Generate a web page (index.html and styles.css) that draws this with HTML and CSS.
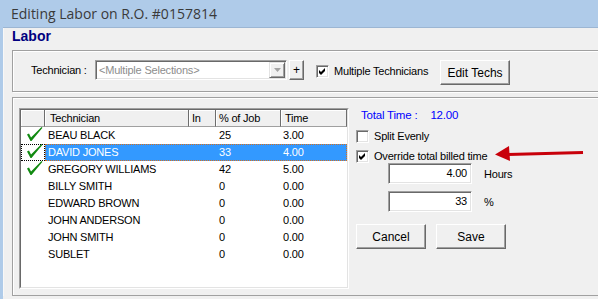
FILE: index.html
```html
<!DOCTYPE html>
<html lang="en">
<head>
    <meta charset="UTF-8">
    <title>Editing Labor on R.O. #0157814</title>
    <link rel="stylesheet" href="styles.css">
</head>
<body>
    <div class="window">
        <div class="titlebar">Editing Labor on R.O. #0157814</div>
        <div class="client">
            <div class="heading">Labor</div>

            <div class="group group-top">
                <span class="tech-label">Technician :</span>
                <div class="combo">
                    <span class="combo-text">&lt;Multiple Selections&gt;</span>
                    <span class="combo-btn">
                        <svg width="7" height="4" viewBox="0 0 7 4"><path d="M0 0H7L3.5 4Z" fill="#a3a3a3"/></svg>
                    </span>
                </div>
                <button class="btn btn-plus">+</button>
                <label class="check check-multi">
                    <span class="box"><svg width="9" height="9" viewBox="0 0 9 9"><path d="M1 3L3 5L7 1V4L3 8L1 6Z" fill="#000"/></svg></span>
                    Multiple Technicians
                </label>
                <button class="btn btn-edit">Edit Techs</button>
            </div>

            <div class="group group-main">
                <div class="grid">
                    <div class="grid-inner">
                        <div class="row head">
                            <div class="cell c-check"></div>
                            <div class="cols">
                                <div class="cell c-name">Technician</div>
                                <div class="cell c-in">In</div>
                                <div class="cell c-pct">% of Job</div>
                                <div class="cell c-time">Time</div>
                            </div>
                        </div>
                        <div class="row">
                            <div class="cell c-check"><svg class="tick" width="16" height="15" viewBox="0 0 16 15"><path d="M0 7.5L2 6.5L4 10.5L14.5 0L15.5 0.8L4.5 14H3.5Z" fill="#118a11"/></svg></div>
                            <div class="cols">
                                <div class="cell c-name">BEAU BLACK</div>
                                <div class="cell c-in"></div>
                                <div class="cell c-pct">25</div>
                                <div class="cell c-time">3.00</div>
                            </div>
                        </div>
                        <div class="row selected">
                            <div class="cell c-check"><svg class="tick" width="16" height="15" viewBox="0 0 16 15"><path d="M0 7.5L2 6.5L4 10.5L14.5 0L15.5 0.8L4.5 14H3.5Z" fill="#118a11"/></svg></div>
                            <div class="cols">
                                <div class="cell c-name">DAVID JONES</div>
                                <div class="cell c-in"></div>
                                <div class="cell c-pct">33</div>
                                <div class="cell c-time">4.00</div>
                            </div>
                        </div>
                        <div class="row">
                            <div class="cell c-check"><svg class="tick" width="16" height="15" viewBox="0 0 16 15"><path d="M0 7.5L2 6.5L4 10.5L14.5 0L15.5 0.8L4.5 14H3.5Z" fill="#118a11"/></svg></div>
                            <div class="cols">
                                <div class="cell c-name">GREGORY WILLIAMS</div>
                                <div class="cell c-in"></div>
                                <div class="cell c-pct">42</div>
                                <div class="cell c-time">5.00</div>
                            </div>
                        </div>
                        <div class="row">
                            <div class="cell c-check"></div>
                            <div class="cols">
                                <div class="cell c-name">BILLY SMITH</div>
                                <div class="cell c-in"></div>
                                <div class="cell c-pct">0</div>
                                <div class="cell c-time">0.00</div>
                            </div>
                        </div>
                        <div class="row">
                            <div class="cell c-check"></div>
                            <div class="cols">
                                <div class="cell c-name">EDWARD BROWN</div>
                                <div class="cell c-in"></div>
                                <div class="cell c-pct">0</div>
                                <div class="cell c-time">0.00</div>
                            </div>
                        </div>
                        <div class="row">
                            <div class="cell c-check"></div>
                            <div class="cols">
                                <div class="cell c-name">JOHN ANDERSON</div>
                                <div class="cell c-in"></div>
                                <div class="cell c-pct">0</div>
                                <div class="cell c-time">0.00</div>
                            </div>
                        </div>
                        <div class="row">
                            <div class="cell c-check"></div>
                            <div class="cols">
                                <div class="cell c-name">JOHN SMITH</div>
                                <div class="cell c-in"></div>
                                <div class="cell c-pct">0</div>
                                <div class="cell c-time">0.00</div>
                            </div>
                        </div>
                        <div class="row">
                            <div class="cell c-check"></div>
                            <div class="cols">
                                <div class="cell c-name">SUBLET</div>
                                <div class="cell c-in"></div>
                                <div class="cell c-pct">0</div>
                                <div class="cell c-time">0.00</div>
                            </div>
                        </div>
                    </div>
                </div>

                <div class="side">
                    <div class="total"><span>Total Time :</span><span class="total-value">12.00</span></div>
                    <label class="check check-split">
                        <span class="box"></span>
                        Split Evenly
                    </label>
                    <label class="check check-override">
                        <span class="box"><svg width="9" height="9" viewBox="0 0 9 9"><path d="M1 3L3 5L7 1V4L3 8L1 6Z" fill="#000"/></svg></span>
                        Override total billed time
                    </label>
                    <div class="field field-hours">
                        <span class="input">4.00</span>
                        <span class="unit">Hours</span>
                    </div>
                    <div class="field field-pct">
                        <span class="input">33</span>
                        <span class="unit">%</span>
                    </div>
                    <div class="actions">
                        <button class="btn btn-action">Cancel</button>
                        <button class="btn btn-action">Save</button>
                    </div>
                </div>
            </div>
        </div>

        <!-- red callout arrow drawn over the dialog -->
        <svg class="callout" width="96" height="22" viewBox="0 0 96 22">
            <path d="M16 11.6L92 9.6" stroke="#c8000a" stroke-width="3" fill="none"/>
            <path d="M4 11.4L18 3L19 18Z" fill="#c8000a"/>
        </svg>
    </div>
</body>
</html>
```

FILE: styles.css
```css
body {
    margin: 0;
    background: #f0f0f0;
    font-family: "Liberation Sans", Arial, sans-serif;
    font-size: 11px;
    letter-spacing: -0.2px;
    color: #000;
}
.window {
    position: relative;
    width: 598px;
    height: 299px;
    overflow: hidden;
    border-left: 3px solid #afcbe9;
    box-sizing: border-box;
}
.titlebar {
    height: 27px;
    line-height: 27px;
    padding-left: 8px;
    background: #afcbe9;
    border-bottom: 1px solid #9cb6d3;
    font-family: "Open Sans", "Noto Sans", sans-serif;
    font-size: 14px;
    letter-spacing: 0;
    color: #3a3a3a;
}
.client {
    border-left: 1px solid #f8f8f8;
    padding-left: 8px;
    overflow: hidden;
}
.heading {
    height: 16px;
    line-height: 16px;
    font-size: 14px;
    font-weight: bold;
    letter-spacing: 0;
    color: #000080;
}

/* etched group boxes */
.group {
    width: 640px;
    box-sizing: border-box;
    border: 1px solid #a0a0a0;
    box-shadow: inset 1px 1px 0 #fff, 1px 1px 0 #fff;
    display: flex;
    align-items: flex-start;
}
.group-top {
    margin-top: 6px;
    height: 42px;
    padding: 9px 0 0 18px;
}
.group-main {
    margin-top: 5px;
    height: 199px;
    padding: 10px 0 0 6px;
}

.tech-label {
    width: 64px;
    line-height: 20px;
}
.combo {
    width: 192px;
    height: 20px;
    box-sizing: border-box;
    padding: 1px;
    background: #fff;
    border: 1px solid;
    border-color: #a0a0a0 #fff #fff #a0a0a0;
    box-shadow: inset 1px 1px 0 #696969, inset -1px -1px 0 #e3e3e3;
    display: flex;
}
.combo-text {
    flex: 1;
    padding-left: 2px;
    line-height: 16px;
    color: #8d8d8d;
}
.combo-btn {
    width: 16px;
    height: 16px;
    box-sizing: border-box;
    background: #f0f0f0;
    border: 1px solid;
    border-color: #e3e3e3 #696969 #696969 #e3e3e3;
    box-shadow: inset 1px 1px 0 #fff, inset -1px -1px 0 #a0a0a0;
    display: flex;
    align-items: center;
    justify-content: center;
}

/* classic raised buttons */
.btn {
    box-sizing: border-box;
    margin: 0;
    padding: 0;
    background: #f0f0f0;
    border: 1px solid;
    border-color: #fff #696969 #696969 #fff;
    box-shadow: inset -1px -1px 0 #a0a0a0;
    font: inherit;
    color: #000;
}
.btn-plus {
    width: 15px;
    height: 20px;
    margin-left: 2px;
    font-size: 12px;
}
.btn-edit {
    width: 70px;
    height: 25px;
    font-size: 12px;
}
.btn-action {
    width: 70px;
    height: 25px;
    font-size: 12px;
}

/* checkboxes */
.check {
    display: flex;
    align-items: center;
    height: 13px;
    line-height: 13px;
    white-space: nowrap;
}
.box {
    width: 13px;
    height: 13px;
    box-sizing: border-box;
    margin-right: 5px;
    background: #fff;
    border: 1px solid;
    border-color: #a0a0a0 #fff #fff #a0a0a0;
    box-shadow: inset 1px 1px 0 #696969, inset -1px -1px 0 #e3e3e3;
    display: flex;
    align-items: center;
    justify-content: center;
}
.check-multi {
    width: 124px;
    margin: 5px 0 0 12px;
}

/* technician list */
.grid {
    width: 330px;
    height: 181px;
    box-sizing: border-box;
    border: 1px solid;
    border-color: #a0a0a0 #fff #fff #a0a0a0;
    flex-shrink: 0;
}
.grid-inner {
    height: 100%;
    box-sizing: border-box;
    border: 1px solid;
    border-color: #696969 #e3e3e3 #e3e3e3 #696969;
    background: #fff;
}
.row {
    display: flex;
    height: 17px;
    line-height: 17px;
}
.cols {
    flex: 1;
    display: grid;
    grid-template-columns: 144px 27px 65px 1fr;
}
.cell {
    padding-left: 3px;
    white-space: nowrap;
    overflow: hidden;
}
.c-check {
    width: 24px;
    padding: 0;
    box-sizing: border-box;
}
.tick {
    display: block;
    margin: 0 0 0 6px;
}
.c-time {
    padding-left: 2px;
}
.head .cell {
    box-sizing: border-box;
    background: #f0f0f0;
    border-right: 1px solid #6d6d6d;
    border-bottom: 1px solid #a0a0a0;
    box-shadow: inset 1px 1px 0 #fff;
    line-height: 16px;
}
.head .c-name {
    padding-left: 5px;
}
.head .c-time {
    padding-left: 4px;
}
.selected .cols {
    background: #3399ff;
    color: #fff;
    outline: 1px dotted #d8701c;
    outline-offset: -1px;
}
.selected .c-check {
    outline: 1px dotted #000;
    outline-offset: -1px;
}

/* right-hand panel */
.side {
    margin-left: 7px;
    display: flex;
    flex-direction: column;
}
.total {
    padding-left: 5px;
    line-height: 14px;
    color: #0000ff;
    font-size: 11.5px;
}
.total-value {
    margin-left: 13px;
}
.check-split {
    margin-top: 8px;
}
.check-override {
    margin-top: 7px;
}
.field {
    display: flex;
    align-items: center;
    margin-left: 32px;
}
.field-hours {
    margin-top: 0;
}
.field-pct {
    margin-top: 7px;
}
.input {
    width: 84px;
    height: 21px;
    box-sizing: border-box;
    padding-right: 4px;
    text-align: right;
    line-height: 19px;
    background: #fff;
    border: 1px solid;
    border-color: #a0a0a0 #fff #fff #a0a0a0;
    box-shadow: inset 1px 1px 0 #696969, inset -1px -1px 0 #e3e3e3;
}
.unit {
    margin-left: 12px;
}
.actions {
    display: flex;
    gap: 10px;
    margin-top: 12px;
}

.callout {
    position: absolute;
    left: 488px;
    top: 143px;
}
```
